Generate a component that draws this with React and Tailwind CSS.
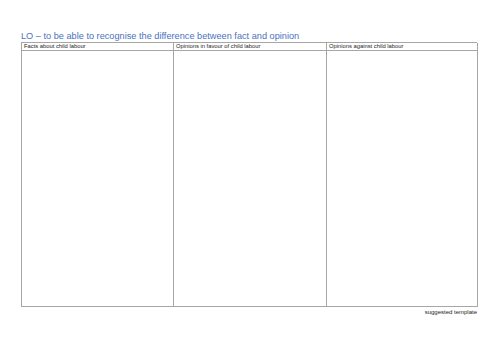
import React from 'react';

const columns = [
  'Facts about child labour',
  'Opinions in favour of child labour',
  'Opinions against child labour',
];

const App = () => {
  return (
    <div className="w-[500px] h-[354px] bg-white pl-[21px] pt-[30px] font-['Liberation_Sans',sans-serif]">
      <h1 className="h-[12px] text-[9.2px] leading-[12px] text-[#4a72c0] whitespace-nowrap">
        LO – to be able to recognise the difference between fact and opinion
      </h1>
      <div className="grid grid-cols-[152px_153px_151px] grid-rows-[8px_256px] w-[456px] border-t border-l border-[#a6a6a6]">
        {columns.map((c) => (
          <div
            key={c}
            className="border-r border-b border-[#a6a6a6] pl-[2px] text-[5.8px] leading-[7px] text-[#222] whitespace-nowrap"
          >
            {c}
          </div>
        ))}
        {columns.map((c) => (
          <div key={c + '-body'} className="border-r border-b border-[#a6a6a6]" />
        ))}
      </div>
      <p className="w-[456px] text-right text-[6px] leading-[8px] mt-px text-[#222]">
        suggested template
      </p>
    </div>
  );
};

export default App;
